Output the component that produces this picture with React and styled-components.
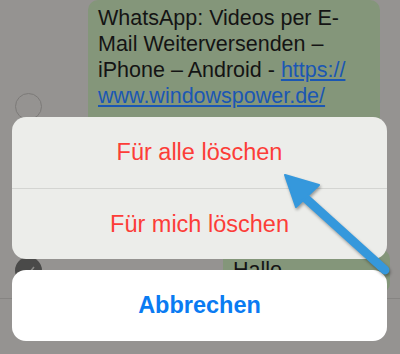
import React from "react";
import styled, { createGlobalStyle } from "styled-components";

const GlobalStyle = createGlobalStyle`
  html, body {
    margin: 0;
    padding: 0;
    width: 400px;
    height: 354px;
    overflow: hidden;
    background: #959391;
  }
  * { box-sizing: border-box; }
`;

const Screen = styled.div`
  position: relative;
  width: 400px;
  height: 354px;
  overflow: hidden;
  background: #959391;
  font-family: "Liberation Sans", Arial, sans-serif;
`;

const Chat = styled.div`
  display: flex;
  flex-direction: column;
`;

const Row = styled.div`
  display: flex;
  align-items: ${(p) => p.align || "center"};
  height: ${(p) => p.h}px;
  padding-left: 15px;
`;

const SelectCircle = styled.div`
  width: 27px;
  height: 27px;
  border-radius: 50%;
  flex-shrink: 0;
  margin-bottom: ${(p) => p.mb || 0}px;
  border: ${(p) => (p.checked ? "none" : "1.5px solid #7c7a78")};
  background: ${(p) => (p.checked ? "#4a4a49" : "transparent")};
  display: flex;
  align-items: center;
  justify-content: center;
`;

const Bubble = styled.div`
  align-self: ${(p) => (p.top ? "flex-start" : "auto")};
  margin-left: auto;
  margin-right: ${(p) => p.right}px;
  margin-bottom: ${(p) => p.mb || 0}px;
  width: ${(p) => p.w}px;
  height: ${(p) => p.bh}px;
  background: #84967a;
  border-radius: 10px;
  padding: ${(p) => p.pad};
  color: #141414;
  font-size: 21.5px;
  line-height: 26px;
  overflow: hidden;
  white-space: nowrap;
`;

const LinkText = styled.span`
  color: #1b57b3;
  text-decoration: underline;
`;

const Toolbar = styled.div`
  height: 60px;
  border-top: 1px solid #868482;
`;

const Sheet = styled.div`
  position: absolute;
  left: 12px;
  right: 13px;
  bottom: 13px;
  display: flex;
  flex-direction: column;
  gap: 11px;
`;

const Group = styled.div`
  background: #ecedea;
  border-radius: 14px;
  overflow: hidden;
  display: flex;
  flex-direction: column;
`;

const Action = styled.div`
  height: ${(p) => p.h}px;
  display: flex;
  align-items: center;
  justify-content: center;
  font-size: 23.5px;
  color: ${(p) => (p.cancel ? "#0a7bf2" : "#fc3d38")};
  font-weight: ${(p) => (p.cancel ? 700 : 400)};
  border-top: ${(p) => (p.divided ? "1px solid #d4d5d2" : "none")};
`;

const Cancel = styled.div`
  background: #ffffff;
  border-radius: 14px;
  overflow: hidden;
`;

const Annotation = styled.svg`
  position: absolute;
  left: 0;
  top: 0;
  pointer-events: none;
  filter: drop-shadow(1px 2px 1.5px rgba(0, 0, 0, 0.35));
`;

export default function App() {
  return (
    <Screen>
      <GlobalStyle />
      <Chat>
        <Row h={212}>
          <SelectCircle />
          <Bubble top w={292} bh={212} right={20} pad="5px 10px 0 10px">
            WhatsApp: Videos per E-
            <br />
            Mail Weiterversenden –
            <br />
            iPhone – Android - <LinkText>https://</LinkText>
            <br />
            <LinkText>www.windowspower.de/</LinkText>
          </Bubble>
        </Row>
        <Row h={86} align="flex-end">
          <SelectCircle checked mb={14}>
            <svg width="14" height="14" viewBox="0 0 14 14">
              <path d="M2 7.5 L5.5 11 L12 3" stroke="#8a8a88" strokeWidth="1.6" fill="none" />
            </svg>
          </SelectCircle>
          <Bubble w={167} bh={44} right={10} mb={5} pad="8px 10px">
            Hallo
          </Bubble>
        </Row>
        <Toolbar />
      </Chat>

      <Sheet>
        <Group>
          <Action h={71}>Für alle löschen</Action>
          <Action h={71} divided>Für mich löschen</Action>
        </Group>
        <Cancel>
          <Action h={71} cancel>Abbrechen</Action>
        </Cancel>
      </Sheet>

      <Annotation width="400" height="354" viewBox="0 0 400 354">
        <line x1="385" y1="270" x2="302" y2="195" stroke="#3598dc" strokeWidth="9" strokeLinecap="round" />
        <polygon points="285,175 319,185 296,207" fill="#3598dc" stroke="#3598dc" strokeWidth="2" strokeLinejoin="round" />
      </Annotation>
    </Screen>
  );
}
